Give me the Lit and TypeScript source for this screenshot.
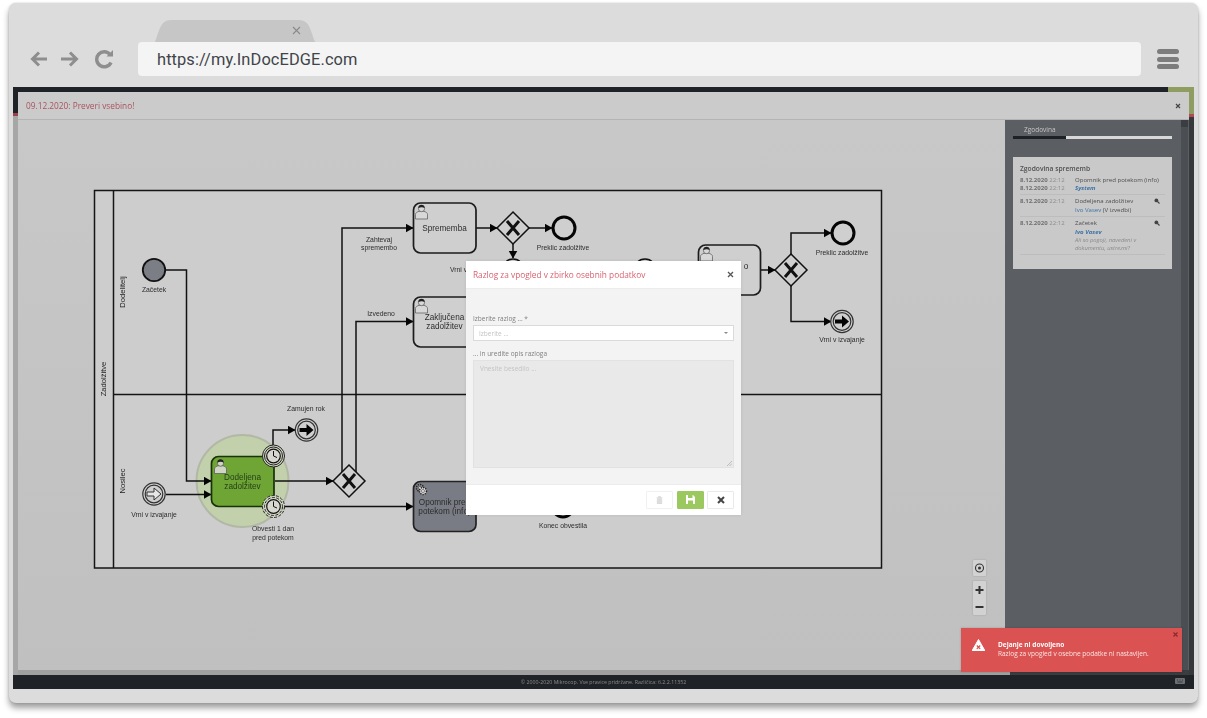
import { LitElement, html, css, svg } from "lit";
import { customElement } from "lit/decorators.js";

const label = (x: number, y: number, t: string, cls = "lbl") =>
  svg`<text x=${x} y=${y} class=${cls} text-anchor="middle">${t}</text>`;
const vlabel = (x: number, y: number, t: string) =>
  svg`<text class="lane" text-anchor="middle" transform="translate(${x} ${y}) rotate(-90)">${t}</text>`;
const flow = (d: string, w = 1.5) =>
  svg`<path d=${d} fill="none" stroke="#111" stroke-width=${w} marker-end="url(#arr)"/>`;
const gateway = (x: number, y: number) => svg`
  <path d="M${x} ${y - 16}L${x + 16} ${y}L${x} ${y + 16}L${x - 16} ${y}Z" fill="#cfcfcf" stroke="#111" stroke-width="1.500"/>
  <path d="M${x - 6} ${y - 7}L${x + 6} ${y + 7}M${x + 6} ${y - 7}L${x - 6} ${y + 7}" stroke="#111" stroke-width="3"/>`;
const endEv = (x: number, y: number) =>
  svg`<circle cx=${x} cy=${y} r="11" fill="#cfcfcf" stroke="#050505" stroke-width="3"/>`;
const arrowEv = (x: number, y: number) => svg`
  <circle cx=${x} cy=${y} r="11.2" fill="#cfcfcf" stroke="#333" stroke-width="1.2"/>
  <circle cx=${x} cy=${y} r="8.8" fill="#cfcfcf" stroke="#333" stroke-width="1.2"/>
  <path d="M${x - 7} ${y - 2}h7v-4l7 6l-7 6v-4h-7z" fill="#050505"/>`;
const hollowEv = (x: number, y: number) => svg`
  <circle cx=${x} cy=${y} r="11.2" fill="#cfcfcf" stroke="#333" stroke-width="1.2"/>
  <circle cx=${x} cy=${y} r="8.8" fill="#cfcfcf" stroke="#333" stroke-width="1.2"/>
  <path d="M${x - 7} ${y - 2}h7v-4l7 6l-7 6v-4h-7z" fill="#e6e6e6" stroke="#333" stroke-width="1"/>`;
const task = (x: number, y: number, w = 62.5, h = 50, fill = "#cfcfcf", stroke = "#1c1c1c") =>
  svg`<rect x=${x} y=${y} width=${w} height=${h} rx="7" fill=${fill} stroke=${stroke} stroke-width="1.7"/>`;
const person = (x: number, y: number, fill = "#d8d8d8") => svg`
  <path d="M${x} ${y + 14}v-4.5c0-2 2-2.6 3.6-3.2h4.8c1.600.6 3.6 1.200 3.6 3.200v4.500z" fill=${fill} stroke="#555" stroke-width=".7"/>
  <circle cx=${x + 6} cy=${y + 3.6} r="3.1" fill=${fill} stroke="#555" stroke-width=".7"/>
  <path d="M${x + 2.800} ${y + 3.2}c0-2.800 1.500-3.400 3.200-3.400s3.200.8 3.200 3.400c-1.500-1.400-4.500-1.400-6.400 0z" fill="#222"/>`;
const clock = (x: number, y: number, dashed = false) => svg`
  <circle cx=${x} cy=${y} r="11" fill="#cfd4c0" stroke="#222" stroke-width="1" stroke-dasharray=${dashed ? "3 1.500" : "none"}/>
  <circle cx=${x} cy=${y} r="9" fill="none" stroke="#222" stroke-width="1" stroke-dasharray=${dashed ? "3 1.500" : "none"}/>
  <circle cx=${x} cy=${y} r="6.8" fill="#d8d8d0" stroke="#111" stroke-width="1.2"/>
  <path d="M${x} ${y - 5}V${y}L${x + 3.500} ${y + 1.500}" fill="none" stroke="#111" stroke-width="1"/>`;
const gear = (x: number, y: number, r: number, fill: string) => svg`
  <circle cx=${x} cy=${y} r=${r} fill=${fill} stroke="#222" stroke-width="1.500" stroke-dasharray="1.300 1"/>
  <circle cx=${x} cy=${y} r=${r * 0.45} fill="#ddd" stroke="#333" stroke-width=".5"/>`;

@customElement("app-root")
export class AppRoot extends LitElement {
  static styles = css`
    :host { display: block; width: 1207px; height: 718px; background: #fff; overflow: hidden;
      font-family: "Open Sans", "Liberation Sans", sans-serif; }
    .page { padding: 3px 9px 0; }
    .frame { height: 700px; background: #dcdcdc; border-radius: 7px; display: flex; flex-direction: column;
      box-shadow: 0 5px 6px rgba(0,0,0,.38), 0 0 2px rgba(0,0,0,.18); }
    .tabstrip { height: 39px; padding-left: 146px; display: flex; align-items: flex-end; flex: none; }
    .tab { width: 160px; height: 22px; background: #c6c6c6; position: relative; display: flex; justify-content: flex-end;
      clip-path: path("M0 22 C4 12 5 0 16 0 H144 C155 0 156 12 160 22Z"); }
    .tab svg { margin: 6px 14px 0 0; }
    .toolbar { height: 34px; flex: none; display: flex; align-items: center; }
    .nav { width: 129px; flex: none; padding-left: 21px; box-sizing: border-box; height: 34px; display: flex; align-items: center; }
    .url { width: 1003px; height: 34px; flex: none; box-sizing: border-box; background: #f4f4f4; border-radius: 4px; padding: 0 19px;
      display: flex; align-items: center; font: 16.400px "Roboto", sans-serif; letter-spacing: .1px; color: #40444a; }
    .menu { margin-left: 16px; width: 22px; display: flex; flex-direction: column; gap: 2.500px; }
    .menu i { display: block; height: 5px; border-radius: 2.500px; background: #7c7c7c; }
    .viewport { margin: 11px 4px 0; height: 602px; background: #1f2227; position: relative; display: flex; flex-direction: column;
      overflow: hidden; filter: blur(.4px); }
    .strip { height: 5px; flex: none; display: flex; justify-content: flex-end; }
    .strip i { width: 26px; background: #8f9c62; display: block; }
    .mid { flex: 1; display: flex; min-height: 0; }
    .rail { width: 5px; flex: none; display: flex; flex-direction: column; }
    .rail .top { height: 21px; background: #1f2227; }
    .rail .red { height: 3px; background: #9c3f50; }
    .rail .rest { flex: 1; background: #a6a6a6; }
    .rail.r .top { height: 22px; background: #8f9c62; }
    .rail.r .red { background: #b24a56; }
    .rail.r .rest { background: #36383c; }
    .main { flex: 1; min-width: 0; display: flex; flex-direction: column; }
    .notice { height: 27px; flex: none; background: #cbcbcb; border-bottom: 1px solid #b4b4b4; display: flex; align-items: center;
      justify-content: space-between; padding: 0 8px; font-size: 8.300px; color: #a9525f; }
    .notice svg { display: block; }
    .work { flex: 1; min-height: 0; display: flex; }
    .diagram { width: 987px; flex: none; position: relative; background: linear-gradient(#c8c8c8, #c0c0c0); }
    .diagram > svg { display: block; }
    .lbl { font: 6.800px "Liberation Sans", Arial, sans-serif; fill: #2c2c2c; }
    .tlbl { font: 8.200px "Liberation Sans", Arial, sans-serif; fill: #2c2c2c; }
    .glbl { font: 8.200px "Liberation Sans", Arial, sans-serif; fill: #26401a; }
    .lane { font: 7.600px "Liberation Sans", Arial, sans-serif; fill: #222; }
    .zoomer { position: absolute; left: 955px; top: 440px; display: flex; flex-direction: column; gap: 5px; }
    .zb { width: 13px; background: #d2d2d2; border-radius: 1px; box-shadow: 0 0 2px rgba(0,0,0,.2); display: flex; flex-direction: column; }
    .zb svg { display: block; }
    .side { flex: 1; background: #5b5e63; padding: 0 17px 0 8px; position: relative; }
    .scroll { position: absolute; right: 1px; top: 0; bottom: 0; width: 7px; background: #4b4e52; }
    .scroll i { display: block; height: 7px; background: #3a3d41; }
    .tabs { padding: 5px 0 0 11px; font-size: 6.500px; color: #c4c4c4; height: 11px; line-height: 9px; }
    .tabline { display: flex; height: 2.500px; margin-bottom: 18px; }
    .tabline b { width: 53px; background: #1e2126; }
    .tabline i { flex: 1; background: #d8d8d8; }
    .panel { height: 112px; box-sizing: border-box; background: #c9c9c9; padding: 7px 7px 0; color: #4d4d4d; font-size: 6.050px; line-height: 8.400px; }
    .panel h4 { margin: 0 0 1px; font-size: 6.700px; line-height: 9px; font-weight: 600; color: #505050; }
    .row { display: grid; grid-template-columns: 55px 1fr; border-bottom: 1px solid #bdbdbd; padding: 2px 0 2px; position: relative; }
    .row b { font-weight: 700; color: #707070; }
    .when { color: #8d8d8d; }
    .who { color: #3f73a5; }
    .who.em { font-weight: 700; font-style: italic; }
    .note { font-style: italic; color: #8a8a8a; font-size: 5.800px; line-height: 8px; }
    .row svg { position: absolute; right: 5px; top: 3px; }
    .bottom { height: 5px; flex: none; display: flex; background: #3a3c40; }
    .bottom i { width: 992px; background: #a0a0a0; display: block; }
    .footer { height: 14px; flex: none; background: #1f2227; color: #8b8b8b; font-size: 5.250px; position: relative;
      display: flex; align-items: center; justify-content: center; }
    .footer svg { position: absolute; right: 9px; top: 3px; }
    .modal { position: absolute; left: 453px; top: 174px; width: 275px; height: 254px; background: #fff; display: flex; flex-direction: column;
      box-shadow: 0 0 3px rgba(0,0,0,.1); }
    .mhead { height: 27px; flex: none; padding: 0 7px; border-bottom: 1px solid #ececec; display: flex; align-items: center; justify-content: space-between;
      font-size: 8.300px; color: #d8616f; }
    .mbody { flex: 1; background: #f3f3f3; padding: 25px 7px 0; display: flex; flex-direction: column; color: #808080; font-size: 6.500px; }
    .mbody label { line-height: 10px; height: 11px; display: block; }
    .select { height: 16px; box-sizing: border-box; background: #fff; border: 1.500px solid #dadada; margin-bottom: 8px; padding: 0 5px;
      display: flex; align-items: center; justify-content: space-between; color: #c4c4c4; }
    .caret { width: 0; height: 0; border: 2px solid transparent; border-top: 2.500px solid #888; border-bottom: 0; }
    .area { height: 108px; box-sizing: border-box; background: #e9e9e9; border: 1px solid #e2e2e2; padding: 3px 6px; color: #c4c4c4; position: relative; }
    .grip { position: absolute; right: 1px; bottom: 1px; }
    .mfoot { height: 31px; flex: none; border-top: 1px solid #ececec; box-sizing: border-box; padding: 6px 7px; display: flex; justify-content: flex-end; gap: 3.500px; background: #fff; }
    .btn { width: 27px; height: 17.500px; box-sizing: border-box; border: 1px solid #e9e9e9; border-radius: 1px; background: #fff; display: flex; align-items: center; justify-content: center; }
    .btn.save { background: #9bc95f; border-color: #9bc95f; }
    .btn.del { border-color: #f1f1f1; }
    .toast { position: absolute; left: 948px; top: 541px; width: 221px; height: 44px; background: #da5251; color: #fbe4e4; display: flex;
      font-size: 6.500px; line-height: 9px; box-shadow: 0 0 2px rgba(0,0,0,.2); }
    .toast .ic { width: 37px; flex: none; padding: 11px 0 0 11px; box-sizing: border-box; }
    .toast .tx { padding-top: 12px; }
    .toast b { color: #fff; display: block; font-weight: 700; }
    .toast .cl { position: absolute; right: 4px; top: 4px; }
  `;

  render() {
    return html`<div class="page"><div class="frame">
      <div class="tabstrip"><div class="tab">
        <svg width="9" height="9" viewBox="0 0 9 9"><path d="M1 1l7 7M8 1l-7 7" stroke="#8a8a8a" stroke-width="1.100"/></svg>
      </div></div>
      <div class="toolbar">
        <div class="nav">
          <svg width="84" height="20" viewBox="0 0 84 20" fill="none" stroke="#8e8e8e" stroke-width="3">
            <path d="M17 10H2.500M9 3.500L2.500 10L9 16.500"/>
            <path d="M31 10H46M40 3.500L46.500 10L40 16.500"/>
            <path d="M81 13.500A7.500 7.500 0 1 1 80 5.500" stroke-width="3.400"/>
            <path d="M76.500 7.500H83V1z" fill="#8e8e8e" stroke="none"/>
          </svg>
        </div>
        <div class="url">https://my.InDocEDGE.com</div>
        <div class="menu"><i></i><i></i><i></i></div>
      </div>
      <div class="viewport">
        <div class="strip"><i></i></div>
        <div class="mid">
          <div class="rail"><div class="top"></div><div class="red"></div><div class="rest"></div></div>
          <div class="main">
            <div class="notice"><span>09.12.2020: Preveri vsebino!</span>
              <svg width="6" height="6" viewBox="0 0 6 6"><path d="M1 1l4 4M5 1l-4 4" stroke="#444" stroke-width="1.200"/></svg></div>
            <div class="work">
              <div class="diagram">
                ${this.diagram()}
                <div class="zoomer">
                  <div class="zb"><svg width="13" height="16" viewBox="0 0 13 16"><circle cx="6.500" cy="8" r="4" fill="none" stroke="#333" stroke-width="1.100"/><circle cx="6.500" cy="8" r="1.500" fill="#333"/></svg></div>
                  <div class="zb">
                    <svg width="13" height="17" viewBox="0 0 13 17"><path d="M2.500 9h8M6.500 5v8" stroke="#333" stroke-width="2"/></svg>
                    <svg width="13" height="17" viewBox="0 0 13 17"><path d="M2.500 9h8" stroke="#333" stroke-width="2"/></svg>
                  </div>
                </div>
              </div>
              <div class="side">
                <div class="scroll"><i></i></div>
                <div class="tabs">Zgodovina</div>
                <div class="tabline"><b></b><i></i></div>
                <div class="panel">
                  <h4>Zgodovina sprememb</h4>
                  <div class="row"><div class="when"><b>8.12.2020</b> 22:12<br><b>8.12.2020</b> 22:12</div><div>Opomnik pred potekom (info)<br><span class="who em">System</span></div></div>
                  <div class="row"><div class="when"><b>8.12.2020</b> 22:12</div><div>Dodeljena zadolžitev<br><span class="who">Ivo Vasev</span> (V izvedbi)</div>${this.lens()}</div>
                  <div class="row"><div class="when"><b>8.12.2020</b> 22:12</div><div>Začetek<br><span class="who em">Ivo Vasev</span><div class="note">Ali so pogoji, navedeni v dokumentu, ustrezni?</div></div>${this.lens()}</div>
                </div>
              </div>
            </div>
            <div class="bottom"><i></i></div>
          </div>
          <div class="rail r"><div class="top"></div><div class="red"></div><div class="rest"></div></div>
        </div>
        <div class="footer">© 2000-2020 Mikrocop. Vse pravice pridržane. Različica: 6.2.2.11352
          <svg width="10" height="7" viewBox="0 0 10 7"><rect width="10" height="6" rx="1" fill="#6d6f72"/><path d="M2 2h1M4.500 2h1M7 2h1M2.500 4h5" stroke="#2a2c30" stroke-width=".8"/></svg>
        </div>
        <div class="modal">
          <div class="mhead"><span>Razlog za vpogled v zbirko osebnih podatkov</span>
            <svg width="7" height="7" viewBox="0 0 7 7"><path d="M1 1l5 5M6 1l-5 5" stroke="#555" stroke-width="1.300"/></svg></div>
          <div class="mbody">
            <label>Izberite razlog ... *</label>
            <div class="select"><span>Izberite ...</span><span class="caret"></span></div>
            <label>... in uredite opis razloga</label>
            <div class="area">Vnesite besedilo ...
              <svg class="grip" width="5" height="5" viewBox="0 0 5 5"><path d="M0 5L5 0M2.500 5L5 2.500" stroke="#aaa" stroke-width=".7"/></svg></div>
          </div>
          <div class="mfoot">
            <div class="btn del"><svg width="7" height="8" viewBox="0 0 7 8"><path d="M0.500 1.500h6M2.500 1.500V.5h2v1M1.300 2.500h4.400V8H1.300z" fill="#ddd" stroke="#d4d4d4" stroke-width=".6"/></svg></div>
            <div class="btn save"><svg width="9" height="9" viewBox="0 0 9 9"><path d="M0 0h7l2 2v7H0z" fill="#fff"/><path d="M2 0h4.500v3H2zM2 5.500h5V9H2z" fill="#9bc95f"/></svg></div>
            <div class="btn"><svg width="8" height="8" viewBox="0 0 8 8"><path d="M1 1l6 6M7 1l-6 6" stroke="#444" stroke-width="2"/></svg></div>
          </div>
        </div>
        <div class="toast">
          <div class="ic"><svg width="13" height="12" viewBox="0 0 13 12"><path d="M6.500 .5L12.800 11.500H.2z" fill="#fff" stroke="#fff" stroke-linejoin="round"/><path d="M4.800 6.500l3.400 3.400M8.200 6.500l-3.400 3.400" stroke="#da5251" stroke-width="1.300"/></svg></div>
          <div class="tx"><b>Dejanje ni dovoljeno</b>Razlog za vpogled v osebne podatke ni nastavljen.</div>
          <svg class="cl" width="5" height="5" viewBox="0 0 5 5"><path d="M.5 .5l4 4M4.500 .5l-4 4" stroke="#8b2a2a" stroke-width="1.200"/></svg>
        </div>
      </div>
    </div></div>`;
  }

  lens() {
    return html`<svg width="6" height="6" viewBox="0 0 6 6"><circle cx="2.400" cy="2.400" r="1.900" fill="#444"/><path d="M3.500 3.500L5.500 5.500" stroke="#444" stroke-width="1.100"/></svg>`;
  }

  diagram() {
    return html`<svg width="987" height="550" viewBox="18 120 987 550" xmlns="http://www.w3.org/2000/svg">
      <defs><marker id="arr" markerUnits="userSpaceOnUse" markerWidth="9" markerHeight="10" refX="7.500" refY="4.500" orient="auto">
        <path d="M0 0L8 4.500L0 9z" fill="#050505"/></marker></defs>
      ${svg`
      <rect x="94.500" y="190.500" width="787" height="377.500" fill="#cdcdcd" stroke="#151515" stroke-width="1.500"/>
      <path d="M113.500 190.500V568M113.500 394.500H881.500" stroke="#151515" stroke-width="1.500" fill="none"/>
      ${vlabel(106, 379, "Zadolžitve")}${vlabel(125, 292, "Dodelitelj")}${vlabel(125, 481, "Nosilec")}

      <circle cx="242.500" cy="481" r="46" fill="#c2d0ab" stroke="#b2b8a6" stroke-width="2"/>
      ${flow("M165 270H186.500V481H211")}
      ${flow("M166 494.500H211")}
      ${flow("M275 481H333")}
      ${flow("M342 474V228H413")}
      ${flow("M356 474V321.500H413")}
      ${flow("M273 445V430H295")}
      ${flow("M284 506.500H413")}
      ${flow("M476 228H497")}
      ${flow("M529 228H552")}
      ${flow("M513 244V258")}
      ${flow("M761 270H775")}
      ${flow("M791 254V233H831")}
      ${flow("M791 286V321.500H831")}

      <circle cx="154" cy="270" r="11.200" fill="#7c7e86" stroke="#111" stroke-width="1.800"/>
      ${label(154, 292, "Začetek")}
      ${hollowEv(154, 494)}
      ${label(154, 517, "Vrni v izvajanje")}

      ${task(211.500, 456.500, 62.500, 50, "#6ea535", "#18320a")}
      ${person(214.500, 459.500, "#cfd6c4")}
      <text x="242.500" y="480" class="glbl" text-anchor="middle">Dodeljena</text>
      <text x="242.500" y="489" class="glbl" text-anchor="middle">zadolžitev</text>
      ${clock(273.500, 456)}${clock(273.500, 506.500, true)}
      ${label(273, 531, "Obvesti 1 dan")}${label(273, 540, "pred potekom")}
      ${arrowEv(306.500, 430)}${label(306, 411, "Zamujen rok")}
      ${gateway(349, 481)}

      ${task(413.500, 203, 62.500, 50)}${person(415.500, 205)}
      <text x="444.500" y="231" class="tlbl" text-anchor="middle">Sprememba</text>
      ${label(379, 242, "Zahtevaj")}${label(379, 250, "spremembo")}
      ${task(413.500, 297, 62.500, 50)}${person(415.500, 299)}
      <text x="444.500" y="320" class="tlbl" text-anchor="middle">Zaključena</text>
      <text x="444.500" y="329" class="tlbl" text-anchor="middle">zadolžitev</text>
      ${label(381, 316, "Izvedeno")}

      ${gateway(513, 228)}
      ${endEv(564, 228)}${label(563, 250, "Preklic zadolžitve")}
      <circle cx="513" cy="270" r="11" fill="#cfcfcf" stroke="#111" stroke-width="1.500"/>
      <circle cx="645" cy="270" r="11" fill="#cfcfcf" stroke="#111" stroke-width="1.500"/>
      <text x="450" y="272" class="lbl">Vrni v</text>

      ${task(413.500, 481.500, 62.500, 50, "#7a7c85", "#222")}
      ${gear(420, 488, 3.500, "#888")}${gear(423, 491, 3.500, "#ddd")}
      <text x="444.500" y="505" class="tlbl" text-anchor="middle">Opomnik pred</text>
      <text x="444.500" y="514" class="tlbl" text-anchor="middle">potekom (info)</text>
      ${endEv(563, 506)}${label(563, 528, "Konec obvestila")}

      ${task(698.500, 245, 62, 50)}${person(700.500, 247)}
      <text x="746" y="269" class="tlbl" text-anchor="middle">o</text>
      ${gateway(791, 270)}
      ${endEv(843, 233)}${label(842, 255, "Preklic zadolžitve")}
      ${arrowEv(842, 321.500)}${label(842, 342, "Vrni v izvajanje")}
      `}
    </svg>`;
  }
}
